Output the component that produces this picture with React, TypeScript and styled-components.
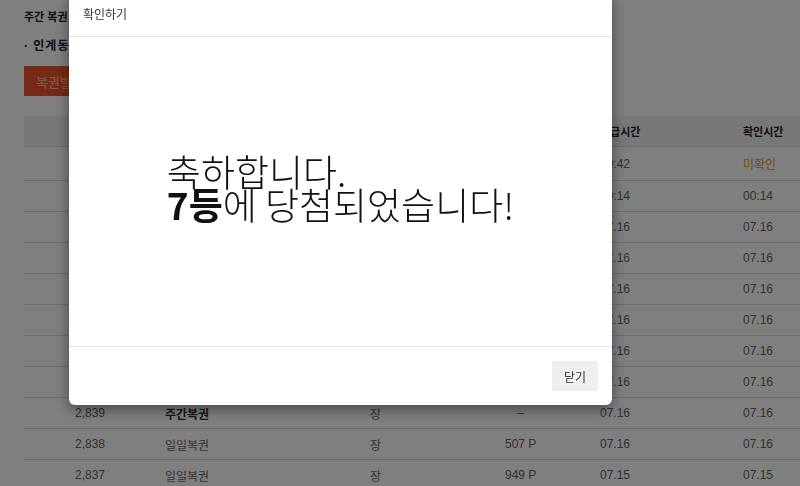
import styled, { createGlobalStyle } from 'styled-components';

const GlobalStyle = createGlobalStyle`
  html, body {
    margin: 0;
    padding: 0;
    background: #ffffff;
    font-family: 'Liberation Sans', 'Noto Sans CJK KR', sans-serif;
  }
`;

const Page = styled.div`
  padding: 10px 0 0 24px;
  width: 800px;
  height: 486px;
  box-sizing: border-box;
  overflow: hidden;
`;

const Title = styled.div`
  font-size: 11px;
  line-height: 14px;
  font-weight: 700;
  color: #222;
`;

const Notice = styled.div`
  margin-top: 15px;
  font-size: 12px;
  line-height: 14px;
  font-weight: 700;
  color: #222;
  letter-spacing: 1px;
`;

const IssueButton = styled.button`
  margin-top: 13px;
  height: 30px;
  padding: 0 12px;
  border: 0;
  border-radius: 0;
  background: #e8552f;
  color: #ffb8a6;
  font-family: 'Noto Sans CJK KR', sans-serif;
  font-size: 13px;
`;

const Table = styled.div`
  margin-top: 20px;
  width: 800px;
`;

const Row = styled.div<{ $head?: boolean; $h?: number }>`
  display: grid;
  grid-template-columns: 141px 205px 135px 95px 143px 1fr;
  align-items: center;
  height: ${(p) => p.$h ?? 30}px;
  border-bottom: 1px solid #dcdcdc;
  background: ${(p) => (p.$head ? '#f1f1f1' : 'transparent')};
  font-size: ${(p) => (p.$head ? 11 : 12)}px;
  font-weight: ${(p) => (p.$head ? 700 : 400)};
  color: ${(p) => (p.$head ? '#222' : '#666')};
`;

const Cell = styled.div<{ $pad?: number; $tone?: string; $bold?: boolean }>`
  padding-left: ${(p) => p.$pad ?? 0}px;
  color: ${(p) => p.$tone ?? 'inherit'};
  font-weight: ${(p) => (p.$bold ? 700 : 'inherit')};
  white-space: nowrap;
`;

const Overlay = styled.div`
  position: fixed;
  inset: 0;
  background: rgba(0, 0, 0, 0.5);
`;

const Modal = styled.div`
  position: absolute;
  left: 69px;
  top: -6px;
  width: 543px;
  background: #fff;
  border-radius: 6px;
  box-shadow: 0 4px 14px rgba(0, 0, 0, 0.45);
  font-family: 'Noto Sans CJK KR', sans-serif;
`;

const ModalHeader = styled.div`
  height: 43px;
  box-sizing: border-box;
  padding: 11px 14px 0;
  border-bottom: 1px solid #e5e5e5;
  font-size: 12px;
  line-height: 18px;
  color: #333;
`;

const ModalBody = styled.div`
  height: 309px;
  display: flex;
  align-items: center;
  justify-content: center;
  padding-bottom: 8px;
  box-sizing: border-box;
`;

const Message = styled.div`
  font-size: 37px;
  line-height: 33px;
  font-weight: 300;
  color: #111;
  text-align: left;
`;

const Strong = styled.b`
  font-weight: 700;
`;

const ModalFooter = styled.div`
  border-top: 1px solid #e5e5e5;
  display: flex;
  justify-content: flex-end;
  padding: 14px 14px 14px;
`;

const CloseButton = styled.button`
  width: 46px;
  height: 30px;
  border: 0;
  background: #efefef;
  color: #333;
  font-family: 'Noto Sans CJK KR', sans-serif;
  font-size: 12px;
  padding: 0;
`;

type Item = { no: string; kind: string; point: string; issued: string; checked: string; weekly?: boolean };

const items: Item[] = [
  { no: '2,847', kind: '주간복권', point: '–', issued: '09:42', checked: '미확인', weekly: true },
  { no: '2,846', kind: '일일복권', point: '312 P', issued: '00:14', checked: '00:14' },
  { no: '2,845', kind: '일일복권', point: '228 P', issued: '07.16', checked: '07.16' },
  { no: '2,844', kind: '일일복권', point: '640 P', issued: '07.16', checked: '07.16' },
  { no: '2,843', kind: '일일복권', point: '115 P', issued: '07.16', checked: '07.16' },
  { no: '2,842', kind: '일일복권', point: '802 P', issued: '07.16', checked: '07.16' },
  { no: '2,841', kind: '일일복권', point: '437 P', issued: '07.16', checked: '07.16' },
  { no: '2,840', kind: '일일복권', point: '359 P', issued: '07.16', checked: '07.16' },
  { no: '2,839', kind: '주간복권', point: '–', issued: '07.16', checked: '07.16', weekly: true },
  { no: '2,838', kind: '일일복권', point: '507 P', issued: '07.16', checked: '07.16' },
  { no: '2,837', kind: '일일복권', point: '949 P', issued: '07.15', checked: '07.15' },
];

const App = () => {
  return (
    <>
      <GlobalStyle />
      <Page>
        <Title>주간 복권 발급 현황</Title>
        <Notice>· 인계동 매장 방문 고객에게 매주 복권이 발급됩니다.</Notice>
        <IssueButton>복권발급</IssueButton>
        <Table>
          <Row $head>
            <Cell $pad={51}>번호</Cell>
            <Cell>복권종류</Cell>
            <Cell>수량</Cell>
            <Cell>당첨금</Cell>
            <Cell>발급시간</Cell>
            <Cell>확인시간</Cell>
          </Row>
          {items.map((it, i) => (
            <Row key={it.no} $h={i === 0 ? 33 : 30}>
              <Cell $pad={51}>{it.no}</Cell>
              <Cell $bold={it.weekly} $tone={it.weekly ? '#333' : undefined}>
                {it.kind}
              </Cell>
              <Cell>장</Cell>
              <Cell $pad={it.point === '–' ? 12 : 0}>{it.point}</Cell>
              <Cell>{it.issued}</Cell>
              <Cell $tone={it.checked === '미확인' ? '#e0a018' : undefined}>{it.checked}</Cell>
            </Row>
          ))}
        </Table>
      </Page>
      <Overlay>
        <Modal>
          <ModalHeader>확인하기</ModalHeader>
          <ModalBody>
            <Message>
              축하합니다.
              <br />
              <Strong>7등</Strong>에 당첨되었습니다!
            </Message>
          </ModalBody>
          <ModalFooter>
            <CloseButton>닫기</CloseButton>
          </ModalFooter>
        </Modal>
      </Overlay>
    </>
  );
};

export default App;
